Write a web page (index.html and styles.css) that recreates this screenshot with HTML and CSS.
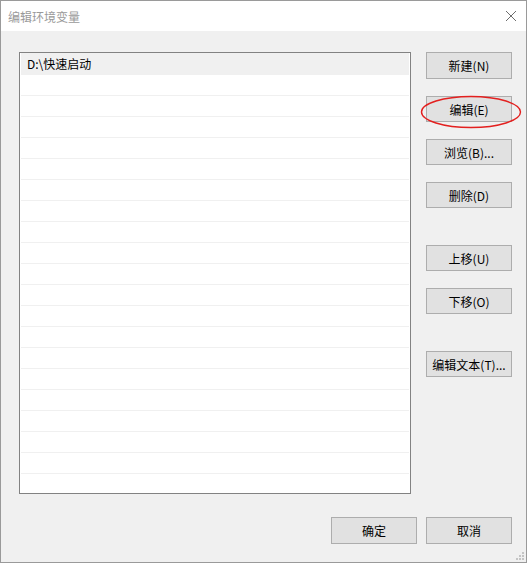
FILE: index.html
```html
<!DOCTYPE html>
<html>
<head lang="zh">
    <meta charset="UTF-8">
    <title>编辑环境变量</title>
    <link rel="stylesheet" href="styles.css">
</head>
<body>
<div class="window">
    <div class="titlebar">
        <span class="title">编辑环境变量</span>
        <svg class="close" width="12" height="12" viewBox="0 0 12 12">
            <path d="M1 1L11 11M11 1L1 11" stroke="#6d6d6d" stroke-width="1" fill="none"/>
        </svg>
    </div>
    <div class="content">
        <div class="main">
            <div class="list">
                <div class="row selected">D:\快速启动</div>
                <div class="row"></div><div class="row"></div><div class="row"></div>
                <div class="row"></div><div class="row"></div><div class="row"></div>
                <div class="row"></div><div class="row"></div><div class="row"></div>
                <div class="row"></div><div class="row"></div><div class="row"></div>
                <div class="row"></div><div class="row"></div><div class="row"></div>
                <div class="row"></div><div class="row"></div><div class="row"></div>
                <div class="row"></div><div class="row"></div>
            </div>
            <div class="side">
                <div class="btn">新建(N)</div>
                <div class="btn marked">编辑(E)
                    <svg class="ring" width="102" height="34" viewBox="0 0 102 34">
                        <ellipse cx="51" cy="17" rx="49.5" ry="15.5" stroke="#e3201f" stroke-width="1.4" fill="none"/>
                    </svg>
                </div>
                <div class="btn">浏览(B)...</div>
                <div class="btn">删除(D)</div>
                <div class="btn gap">上移(U)</div>
                <div class="btn">下移(O)</div>
                <div class="btn gap">编辑文本(T)...</div>
            </div>
        </div>
        <div class="footer">
            <div class="btn">确定</div>
            <div class="btn">取消</div>
        </div>
        <svg class="grip" width="10" height="10" viewBox="0 0 10 10">
            <rect x="7" y="1" width="2" height="2" fill="#c4c4c4"/>
            <rect x="4" y="4" width="2" height="2" fill="#c4c4c4"/>
            <rect x="7" y="4" width="2" height="2" fill="#c4c4c4"/>
            <rect x="1" y="7" width="2" height="2" fill="#c4c4c4"/>
            <rect x="4" y="7" width="2" height="2" fill="#c4c4c4"/>
            <rect x="7" y="7" width="2" height="2" fill="#c4c4c4"/>
        </svg>
    </div>
</div>
</body>
</html>
```

FILE: styles.css
```css
*{
    margin: 0;
    padding: 0;
    box-sizing: border-box;
}
body{
    background: #fff;
    font-family: "Noto Sans CJK SC", "Noto Sans", sans-serif;
    font-size: 12px;
    color: #000;
}
.window{
    width: 527px;
    height: 563px;
    border: 1px solid #9a9a9a;
    display: flex;
    flex-direction: column;
    background: #f0f0f0;
}
.titlebar{
    height: 30px;
    background: #fff;
    display: flex;
    align-items: center;
    justify-content: space-between;
    padding: 0 9px 0 7px;
}
.title{
    color: #9a9a9a;
    font-size: 12px;
}
.content{
    flex: 1;
    position: relative;
    padding: 21px 14px 0 18px;
    display: flex;
    flex-direction: column;
}
.main{
    display: flex;
    gap: 15px;
}
.list{
    width: 392px;
    height: 442px;
    border: 1px solid #828282;
    background: #fff;
    padding: 0 1px;
    overflow: hidden;
}
.row{
    height: 21px;
    border-bottom: 1px solid #f0f0f0;
    line-height: 21px;
    padding-left: 6px;
}
.row.selected{
    height: 22px;
    background: #f0f0f0;
}
.side{
    display: flex;
    flex-direction: column;
    gap: 17px;
}
.btn{
    width: 86px;
    height: 26px;
    border: 1px solid #adadad;
    background: #e1e1e1;
    display: flex;
    align-items: center;
    justify-content: center;
}
.side .btn:first-child{
    height: 27px;
}
.btn.gap{
    margin-top: 20px;
}
.marked{
    position: relative;
}
.ring{
    position: absolute;
    left: -7px;
    top: -2px;
}
.footer{
    display: flex;
    justify-content: flex-end;
    gap: 9px;
    margin-top: 23px;
}
.footer .btn{
    height: 27px;
}
.grip{
    position: absolute;
    right: 1px;
    bottom: 1px;
}
```
